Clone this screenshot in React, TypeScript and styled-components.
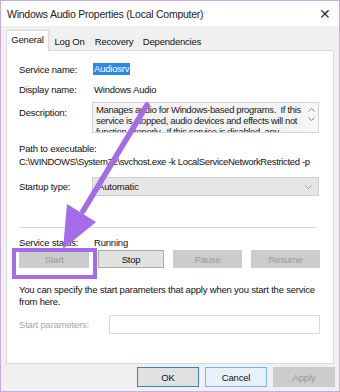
import React from "react";
import styled, { createGlobalStyle } from "styled-components";

const Global = createGlobalStyle`
  html, body { margin: 0; padding: 0; background: #fff; }
  * { box-sizing: border-box; }
`;

const Window = styled.div`
  position: relative;
  width: 340px;
  height: 392px;
  border: 1px solid #c9a9e6;
  display: flex;
  flex-direction: column;
  font-family: "Liberation Sans", Arial, sans-serif;
  font-size: 9.5px;
  letter-spacing: -0.2px;
  color: #111;
  overflow: hidden;
`;

const TitleBar = styled.div`
  height: 25px;
  background: #fff;
  display: flex;
  align-items: center;
  justify-content: space-between;
  padding: 0 8px 0 6px;
  font-size: 10.5px;
  letter-spacing: -0.25px;
  color: #222;
`;

const Close = styled.span`
  font-size: 14px;
  color: #333;
  line-height: 1;
`;

const Body = styled.div`
  flex: 1;
  background: #f0f0f0;
  display: flex;
  flex-direction: column;
  padding: 4px 0 0 5px;
`;

const TabRow = styled.div`
  display: flex;
  align-items: flex-end;
  height: 20px;
  position: relative;
  z-index: 1;
`;

const Tab = styled.div<{ $active?: boolean; $w: number }>`
  width: ${(p) => p.$w}px;
  height: ${(p) => (p.$active ? 21 : 18)}px;
  display: flex;
  align-items: center;
  justify-content: center;
  background: ${(p) => (p.$active ? "#fff" : "#f0f0f0")};
  border: 1px solid ${(p) => (p.$active ? "#d9d9d9" : "transparent")};
  border-bottom: none;
  padding-bottom: ${(p) => (p.$active ? 3 : 0)}px;
  margin-bottom: ${(p) => (p.$active ? -1 : 0)}px;
`;

const Panel = styled.div`
  width: 328px;
  height: 314px;
  background: #fff;
  border: 1px solid #d9d9d9;
  padding: 0 0 0 12px;
  display: flex;
  flex-direction: column;
`;

const Row = styled.div<{ $mt: number; $h?: number; $top?: boolean }>`
  display: flex;
  align-items: ${(p) => (p.$top ? "flex-start" : "center")};
  margin-top: ${(p) => p.$mt}px;
  height: ${(p) => p.$h ?? 12}px;
`;

const Label = styled.div<{ $dim?: boolean; $w?: number; $pt?: number }>`
  width: ${(p) => p.$w ?? 75}px;
  flex: none;
  padding-top: ${(p) => p.$pt ?? 0}px;
  color: ${(p) => (p.$dim ? "#a8a8a8" : "#111")};
`;

const Selected = styled.span`
  background: #2b8ae6;
  color: #fff;
  padding: 0 1px;
  margin-left: -1px;
  line-height: 12px;
`;

const TextLine = styled.div<{ $mt: number; $tight?: boolean }>`
  margin-top: ${(p) => p.$mt}px;
  height: 12px;
  line-height: 12px;
  white-space: nowrap;
  letter-spacing: ${(p) => (p.$tight ? "-0.35px" : "-0.2px")};
`;

const DescBox = styled.div`
  margin-left: -2px;
  width: 227px;
  height: 31px;
  border: 1px solid #d4d4d4;
  background: #f3f3f3;
  display: flex;
  overflow: hidden;
`;

const DescText = styled.div`
  flex: 1;
  padding: 1px 0 0 3px;
  line-height: 11px;
  letter-spacing: -0.35px;
  color: #222;
  white-space: nowrap;
  overflow: hidden;
`;

const Scroll = styled.div`
  width: 13px;
  flex: none;
  background: #f7f7f7;
  display: flex;
  flex-direction: column;
  align-items: center;
  padding-top: 5px;
  gap: 5px;
`;

const Combo = styled.div`
  margin-left: -2px;
  width: 227px;
  height: 19px;
  border: 1px solid #cfcfcf;
  background: #e6e6e6;
  display: flex;
  align-items: center;
  justify-content: space-between;
  padding: 0 6px 0 5px;
`;

const Separator = styled.div`
  margin-top: 31px;
  width: 298px;
  height: 1px;
  background: #d6d6d6;
`;

const ButtonRow = styled.div<{ $mt: number; $gap: number }>`
  display: flex;
  gap: ${(p) => p.$gap}px;
  margin-top: ${(p) => p.$mt}px;
`;

type Variant = "normal" | "disabled" | "default" | "hover";

const bg: Record<Variant, string> = {
  normal: "#e1e1e1",
  disabled: "#cccccc",
  default: "#e1e1e1",
  hover: "#e5f1fb",
};
const bd: Record<Variant, string> = {
  normal: "#adadad",
  disabled: "#cccccc",
  default: "#3c7fc4",
  hover: "#7eb4ea",
};

const Btn = styled.div<{ $v?: Variant; $w: number; $h?: number }>`
  width: ${(p) => p.$w}px;
  height: ${(p) => p.$h ?? 18}px;
  display: flex;
  align-items: center;
  justify-content: center;
  background: ${(p) => bg[p.$v ?? "normal"]};
  border: 1px solid ${(p) => bd[p.$v ?? "normal"]};
  color: ${(p) => (p.$v === "disabled" ? "#9a9a9a" : "#111")};
`;

const Input = styled.div`
  width: 211px;
  height: 19px;
  border: 1px solid #dadada;
  background: #fff;
`;

const Footer = styled.div`
  display: flex;
  justify-content: flex-end;
  gap: 6px;
  padding: 3px 4px 0 0;
`;

const Highlight = styled.div`
  position: absolute;
  left: 11px;
  top: 247px;
  width: 85px;
  height: 31px;
  border: 4px solid #a46ce8;
  pointer-events: none;
`;

const ArrowSvg = styled.svg`
  position: absolute;
  left: 0;
  top: 0;
  pointer-events: none;
`;

export default function App() {
  return (
    <>
      <Global />
      <Window>
        <TitleBar>
          <span>Windows Audio Properties (Local Computer)</span>
          <Close>✕</Close>
        </TitleBar>
        <Body>
          <TabRow>
            <Tab $active $w={43}>General</Tab>
            <Tab $w={41}>Log On</Tab>
            <Tab $w={48}>Recovery</Tab>
            <Tab $w={68}>Dependencies</Tab>
          </TabRow>
          <Panel>
            <Row $mt={12}>
              <Label>Service name:</Label>
              <Selected>Audiosrv</Selected>
            </Row>
            <Row $mt={8}>
              <Label>Display name:</Label>
              <span>Windows Audio</span>
            </Row>
            <Row $mt={7} $h={31} $top>
              <Label $pt={5}>Description:</Label>
              <DescBox>
                <DescText>
                  Manages audio for Windows-based programs.&nbsp; If this
                  <br />
                  service is stopped, audio devices and effects will not
                  <br />
                  function properly.&nbsp; If this service is disabled, any
                </DescText>
                <Scroll>
                  <svg width="7" height="4" viewBox="0 0 7 4">
                    <path d="M0.5 3.5 L3.5 0.5 L6.5 3.5" fill="none" stroke="#888" />
                  </svg>
                  <svg width="7" height="4" viewBox="0 0 7 4">
                    <path d="M0.5 0.5 L3.5 3.5 L6.5 0.5" fill="none" stroke="#888" />
                  </svg>
                </Scroll>
              </DescBox>
            </Row>
            <TextLine $mt={10}>Path to executable:</TextLine>
            <TextLine $mt={1} $tight>C:\WINDOWS\System32\svchost.exe -k LocalServiceNetworkRestricted -p</TextLine>
            <Row $mt={9} $h={19}>
              <Label>Startup type:</Label>
              <Combo>
                <span>Automatic</span>
                <svg width="7" height="4" viewBox="0 0 7 4">
                  <path d="M0.5 0.5 L3.5 3.5 L6.5 0.5" fill="none" stroke="#999" />
                </svg>
              </Combo>
            </Row>
            <Separator />
            <Row $mt={8}>
              <Label>Service status:</Label>
              <span>Running</span>
            </Row>
            <ButtonRow $mt={2} $gap={9}>
              <Btn $v="disabled" $w={70}>Start</Btn>
              <Btn $w={66}>Stop</Btn>
              <Btn $v="disabled" $w={69}>Pause</Btn>
              <Btn $v="disabled" $w={69}>Resume</Btn>
            </ButtonRow>
            <TextLine $mt={16}>You can specify the start parameters that apply when you start the service</TextLine>
            <TextLine $mt={0}>from here.</TextLine>
            <Row $mt={7} $h={19}>
              <Label $dim $w={90}>Start parameters:</Label>
              <Input />
            </Row>
          </Panel>
          <Footer>
            <Btn $v="default" $w={62} $h={20}>OK</Btn>
            <Btn $v="hover" $w={62} $h={20}>Cancel</Btn>
            <Btn $v="disabled" $w={62} $h={20}>Apply</Btn>
          </Footer>
        </Body>
        <Highlight />
        <ArrowSvg width="340" height="392" viewBox="0 0 340 392">
          <line x1="146" y1="104" x2="82" y2="210" stroke="#a46ce8" strokeWidth="5.5" strokeLinecap="round" />
          <polygon points="62,248 66,203 95,221" fill="#a46ce8" />
        </ArrowSvg>
      </Window>
    </>
  );
}
